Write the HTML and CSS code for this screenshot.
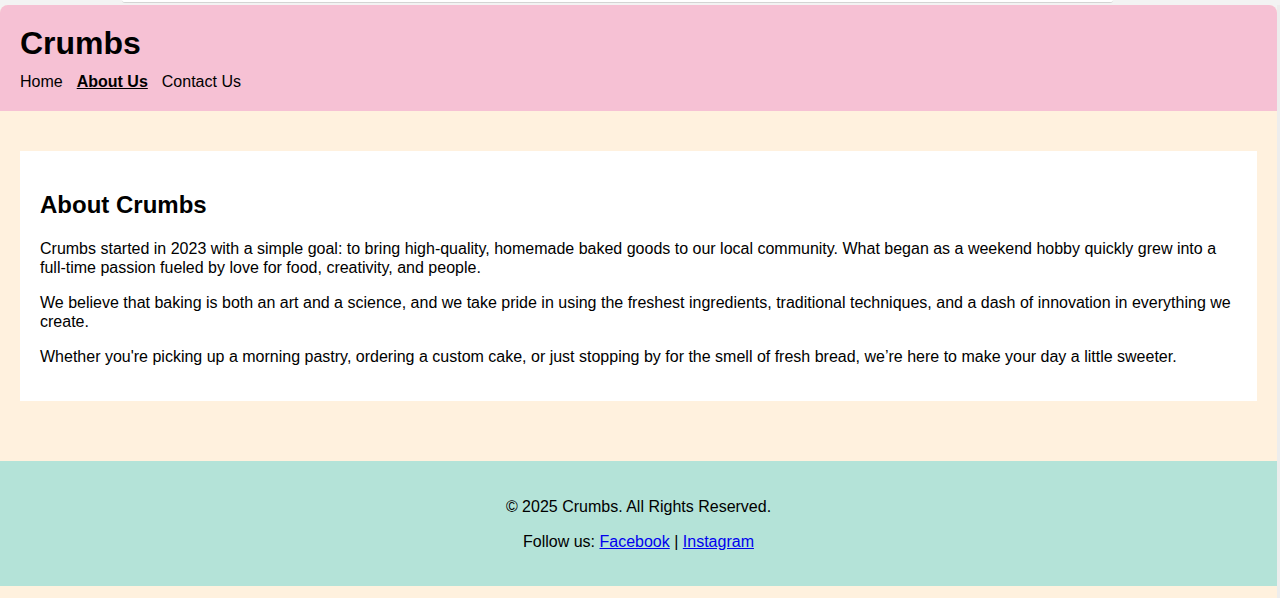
FILE: index.html
```html
<!DOCTYPE html>
<html lang="en">
<head>
<meta charset="utf-8">
<title>About Us - Crumbs</title>
<link rel="stylesheet" href="styles.css">
</head>
<body>
<div class="chrome-top"><div class="chrome-tab"></div></div>
<div class="frame">
  <div class="page">
    <header class="site-header">
      <h1 class="logo">Crumbs</h1>
      <nav class="nav">
        <a href="#" class="nav-link">Home</a>
        <a href="#" class="nav-link active">About Us</a>
        <a href="#" class="nav-link">Contact Us</a>
      </nav>
    </header>
    <main class="main">
      <section class="card">
        <h2 class="card-title">About Crumbs</h2>
        <p>Crumbs started in 2023 with a simple goal: to bring high-quality, homemade baked goods to our local community. What began as a weekend hobby quickly grew into a full-time passion fueled by love for food, creativity, and people.</p>
        <p>We believe that baking is both an art and a science, and we take pride in using the freshest ingredients, traditional techniques, and a dash of innovation in everything we create.</p>
        <p>Whether you're picking up a morning pastry, ordering a custom cake, or just stopping by for the smell of fresh bread, we’re here to make your day a little sweeter.</p>
      </section>
    </main>
    <footer class="site-footer">
      <p>© 2025 Crumbs. All Rights Reserved.</p>
      <p>Follow us: <a href="#" class="ext">Facebook</a> | <a href="#" class="ext">Instagram</a></p>
    </footer>
    <div class="tail"></div>
  </div>
  <div class="scroll-edge"></div>
</div>
</body>
</html>
```
FILE: styles.css
```css
html, body {
  margin: 0;
  padding: 0;
  height: 598px;
  overflow: hidden;
  background: #f3f3f3;
  font-family: "Liberation Sans", Arial, sans-serif;
  color: #000;
}

.chrome-top {
  height: 5px;
  padding-left: 122px;
  background: #f3f3f3;
}

.chrome-tab {
  width: 991px;
  height: 2px;
  background: #ffffff;
  border-bottom: 1px solid #d4d4d4;
  border-radius: 0 0 3px 3px;
}

.frame {
  display: flex;
  height: 593px;
}

.page {
  width: 1277px;
  flex: none;
  background: #fff1de;
  border-radius: 8px 8px 0 0;
  overflow: hidden;
}

.scroll-edge {
  flex: 1;
  background: #ededed;
}

.site-header {
  background: #f6c1d4;
  padding: 20px;
}

.logo {
  margin: 0;
  font-size: 32px;
  font-weight: bold;
}

.nav {
  display: flex;
  gap: 14px;
  margin-top: 11px;
  font-size: 16px;
}

.nav-link {
  color: #000;
  text-decoration: none;
}

.nav-link.active {
  font-weight: bold;
  text-decoration: underline;
}

.main {
  padding: 40px 20px 60px;
}

.card {
  background: #ffffff;
  padding: 20px 20px 19px;
  font-size: 16px;
  line-height: 19px;
}

.card-title {
  font-size: 24px;
  line-height: 28px;
  margin: 20px 0;
}

.card p {
  margin: 16px 0;
}

.site-footer {
  background: #b4e3d8;
  padding: 20px 20px 19px;
  text-align: center;
  font-size: 16px;
  line-height: 19px;
}

.site-footer p {
  margin: 16px 0;
}

.ext {
  color: #0000ee;
}

.tail {
  height: 20px;
}
```
